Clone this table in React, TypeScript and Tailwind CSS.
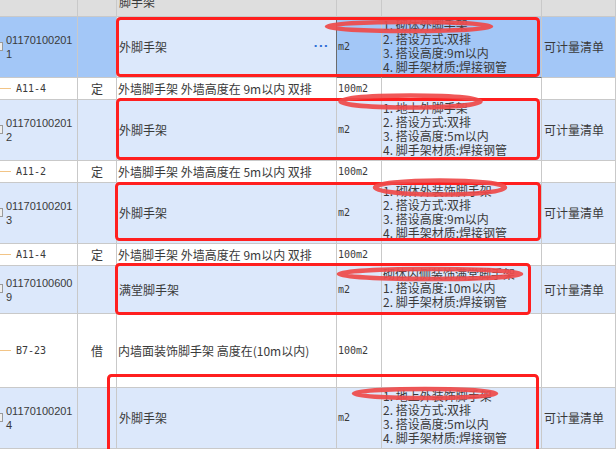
import React from "react";

type BlueRow = {
  kind: "blue";
  code: [string, string];
  name: string;
  features: string[];
  h: string;
  selected?: boolean;
};
type DefRow = {
  kind: "def";
  code: string;
  type: string;
  name: string;
  h: string;
};
type Row = BlueRow | DefRow;

const rows: Row[] = [
  {
    kind: "blue",
    code: ["01170100201", "1"],
    name: "外脚手架",
    features: ["1. 砌体外脚手架", "2. 搭设方式:双排", "3. 搭设高度:9m以内", "4. 脚手架材质:焊接钢管"],
    h: "h-[61px]",
    selected: true,
  },
  { kind: "def", code: "A11-4", type: "定", name: "外墙脚手架 外墙高度在 9m以内 双排", h: "h-[22px]" },
  {
    kind: "blue",
    code: ["01170100201", "2"],
    name: "外脚手架",
    features: ["1. 地上外脚手架", "2. 搭设方式:双排", "3. 搭设高度:5m以内", "4. 脚手架材质:焊接钢管"],
    h: "h-[61px]",
  },
  { kind: "def", code: "A11-2", type: "定", name: "外墙脚手架 外墙高度在 5m以内 双排", h: "h-[22px]" },
  {
    kind: "blue",
    code: ["01170100201", "3"],
    name: "外脚手架",
    features: ["1. 砌体外装饰脚手架", "2. 搭设方式:双排", "3. 搭设高度:9m以内", "4. 脚手架材质:焊接钢管"],
    h: "h-[61px]",
  },
  { kind: "def", code: "A11-4", type: "定", name: "外墙脚手架 外墙高度在 9m以内 双排", h: "h-[22px]" },
  {
    kind: "blue",
    code: ["01170100600", "9"],
    name: "满堂脚手架",
    features: ["砌体内侧装饰满堂脚手架", "1. 搭设高度:10m以内", "2. 脚手架材质:焊接钢管"],
    h: "h-[48px]",
  },
  { kind: "def", code: "B7-23", type: "借", name: "内墙面装饰脚手架 高度在(10m以内)", h: "h-[74px]" },
  {
    kind: "blue",
    code: ["01170100201", "4"],
    name: "外脚手架",
    features: ["1. 地上外装饰脚手架", "2. 搭设方式:双排", "3. 搭设高度:5m以内", "4. 脚手架材质:焊接钢管"],
    h: "h-[61px]",
  },
];

const cell = "border-r border-b border-[#c9c9c9] overflow-hidden";
const grid = "grid grid-cols-[78px_39px_220px_45px_160px_74px] shrink-0";
const cjk = "font-['Noto_Sans_CJK_SC',sans-serif] text-[12px] leading-[14px] text-[#3a3a3a]";
const mono = "font-['DejaVu_Sans_Mono',monospace] text-[10px] leading-[12px] text-[#3a3a3a]";

function Blue({ r }: { r: BlueRow }) {
  const bg = r.selected ? "bg-[#a3c7f7]" : "bg-[#dce8fb]";
  return (
    <div className={`${grid} ${r.h}`}>
      <div className={`${cell} ${bg} flex items-center`}>
        <div className="w-[3px] h-[9px] border border-l-0 border-[#9a9a9a] bg-[#eeeeee] -mt-[2px]" />
        <div className="ml-[3px] font-['Liberation_Sans',sans-serif] text-[11px] leading-[14px] text-[#3a3a3a]">
          <div>{r.code[0]}</div>
          <div>{r.code[1]}</div>
        </div>
      </div>
      <div className={`${cell} ${bg}`} />
      <div
        className={`${cell} bg-[#dce8fb] flex items-center justify-between pl-[2px] pr-[7px] ${
          r.selected ? "border-r-[#6b6b6b]" : ""
        }`}
      >
        <span className={cjk}>{r.name}</span>
        {r.selected && (
          <span className="text-[#2f6fd6] text-[11px] leading-[10px] font-bold tracking-[1px] font-['DejaVu_Sans',sans-serif]">
            ···
          </span>
        )}
      </div>
      <div className={`${cell} ${bg} flex items-center pl-px ${r.selected ? "border-b-[#6b6b6b]" : ""}`}>
        <span className={mono}>m2</span>
      </div>
      <div className={`${cell} ${bg} pl-px pt-px ${r.selected ? "border-b-[#6b6b6b]" : ""}`}>
        {r.features.map((f, i) => (
          <div key={i} className={`${cjk} whitespace-nowrap`}>
            {f}
          </div>
        ))}
      </div>
      <div className={`${cell} ${bg} flex items-center pl-[2px]`}>
        <span className={`${cjk} whitespace-nowrap`}>可计量清单</span>
      </div>
    </div>
  );
}

function Def({ r }: { r: DefRow }) {
  return (
    <div className={`${grid} ${r.h} bg-white`}>
      <div className={`${cell} flex items-center`}>
        <div className="w-[11px] h-px bg-[#f2c486]" />
        <span className={`ml-[5px] ${mono}`}>{r.code}</span>
      </div>
      <div className={`${cell} flex items-center justify-center`}>
        <span className={cjk}>{r.type}</span>
      </div>
      <div className={`${cell} flex items-center pl-px`}>
        <span className={`${cjk} whitespace-nowrap`}>{r.name}</span>
      </div>
      <div className={`${cell} flex items-center pl-px`}>
        <span className={mono}>100m2</span>
      </div>
      <div className={cell} />
      <div className={cell} />
    </div>
  );
}

export default function App() {
  return (
    <div className="relative w-[616px] h-[449px] overflow-hidden bg-white flex flex-col">
      <div className={`${grid} h-[17px] bg-[#dedede]`}>
        <div className={cell} />
        <div className={cell} />
        <div className={`${cell} pl-[2px]`}>
          <div className={`${cjk} -mt-[5px]`}>脚手架</div>
        </div>
        <div className={cell} />
        <div className={cell} />
        <div className={cell} />
      </div>
      {rows.map((r, i) => (r.kind === "blue" ? <Blue key={i} r={r} /> : <Def key={i} r={r} />))}

      <svg
        className="absolute inset-0 pointer-events-none"
        width={616}
        height={449}
        viewBox="0 0 616 449"
      >
        <g fill="none" stroke="#ff1f1f" strokeWidth={3}>
          <rect x={117.5} y={18.5} width={421} height={57} rx={3} />
          <rect x={117.5} y={99.5} width={421} height={59} rx={3} />
          <rect x={116.5} y={183.5} width={423} height={56} rx={3} />
          <rect x={116.5} y={264.5} width={413} height={49} rx={3} />
          <rect x={108.5} y={375.5} width={429} height={100} rx={3} />
        </g>
        <g fill="none" stroke="#ef4a4a" strokeWidth={4.5} opacity={0.92}>
          <ellipse cx={409} cy={26.5} rx={82} ry={4.5} />
          <ellipse cx={410.5} cy={101.5} rx={70} ry={6} />
          <ellipse cx={440} cy={187.5} rx={65} ry={7} />
          <ellipse cx={430} cy={274} rx={91} ry={5} />
          <ellipse cx={425} cy={393.5} rx={71} ry={4.5} />
        </g>
      </svg>
    </div>
  );
}
